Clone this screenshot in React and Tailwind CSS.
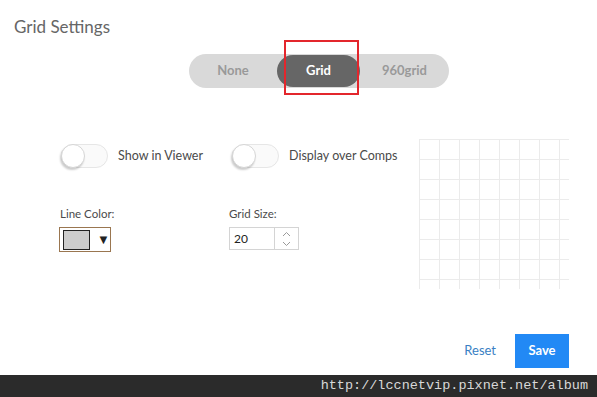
import React from "react";

function Toggle({ label }) {
  return (
    <div className="flex items-center gap-[10px]">
      <div className="relative w-[47px] h-[24px] rounded-full border border-[#e6e6e6] bg-[#fafafa]">
        <div className="absolute left-[-1px] top-[-1px] w-[24px] h-[24px] rounded-full bg-white border border-[#d6d6d6] shadow-[-1px_2px_2px_rgba(0,0,0,0.2)]" />
      </div>
      <span className="text-[12.5px] text-[#4a4a4a]">{label}</span>
    </div>
  );
}

function GridPreview() {
  const cells = Array.from({ length: 64 });
  return (
    <div className="w-[150px] h-[150px] overflow-hidden">
      <div className="grid grid-cols-[repeat(8,20px)] w-[160px]">
        {cells.map((_, i) => (
          <div key={i} className="w-[20px] h-[20px] border-l border-t border-[#ebebeb]" />
        ))}
      </div>
    </div>
  );
}

export default function App() {
  return (
    <div className="w-[597px] h-[397px] bg-white font-['Lato','Noto_Sans',sans-serif] overflow-hidden">
      <div className="h-[375px] flex flex-col">
        <h2 className="pl-[14px] pt-[15px] text-[17px] leading-[24px] text-[#666]">Grid Settings</h2>

        <div className="relative ml-[189px] mt-[15px] w-[260px] h-[34px] rounded-full bg-[#d9d9d9] flex items-center">
          <span className="w-[88px] text-center text-[13px] font-bold text-[#999]">None</span>
          <span className="w-[83px] h-[32px] rounded-full bg-[#666] flex items-center justify-center text-[13px] font-bold text-white">Grid</span>
          <span className="flex-1 text-center text-[13px] font-bold text-[#999]">960grid</span>
          <div className="absolute left-[95px] top-[-14px] w-[75px] h-[55px] border-2 border-[#e3262c]" />
        </div>

        <div className="flex mt-[51px]">
          <div className="flex-1 pt-[5px]">
            <div className="flex pl-[61px]">
              <div className="w-[171px]">
                <Toggle label="Show in Viewer" />
              </div>
              <Toggle label="Display over Comps" />
            </div>

            <div className="flex pl-[59px] mt-[38px]">
              <div className="w-[170px]">
                <div className="text-[11.5px] leading-[16px] text-[#4a4a4a] pl-[1px]">Line Color:</div>
                <div className="mt-[5px] w-[52px] h-[25px] border border-[#9a7650] flex items-center pl-[3px] gap-[7px]">
                  <div className="w-[27px] h-[20px] border border-[#222] bg-[#cccccc]" />
                  <span className="text-[13px] text-[#222]">▼</span>
                </div>
              </div>
              <div>
                <div className="text-[11.5px] leading-[16px] text-[#4a4a4a]">Grid Size:</div>
                <div className="mt-[5px] w-[70px] h-[23px] border border-[#d4d4d4] flex">
                  <div className="w-[45px] border-r border-[#d4d4d4] pl-[4px] text-[12px] leading-[21px] text-[#222]">20</div>
                  <div className="flex-1 flex flex-col items-center justify-center gap-[4px]">
                    <svg width="9" height="6" viewBox="0 0 9 6"><path d="M1 5 L4.5 1.5 L8 5" fill="none" stroke="#9a9a9a" strokeWidth="1" /></svg>
                    <svg width="9" height="6" viewBox="0 0 9 6"><path d="M1 1 L4.5 4.5 L8 1" fill="none" stroke="#9a9a9a" strokeWidth="1" /></svg>
                  </div>
                </div>
              </div>
            </div>
          </div>
          <div className="mr-[28px]">
            <GridPreview />
          </div>
        </div>

        <div className="flex-1" />
        <div className="flex items-center justify-end gap-[19px] pr-[28px] pb-[7px]">
          <span className="text-[13px] text-[#3a7fc4]">Reset</span>
          <button className="w-[54px] h-[34px] bg-[#2289f5] text-white text-[13px] font-bold">Save</button>
        </div>
      </div>
      <div className="h-[22px] bg-[#2b2b2b] flex items-center justify-end pr-[9px]">
        <span className="font-['Liberation_Mono',monospace] text-[13.5px] text-[#d8d8d8]">http://lccnetvip.pixnet.net/album</span>
      </div>
    </div>
  );
}
